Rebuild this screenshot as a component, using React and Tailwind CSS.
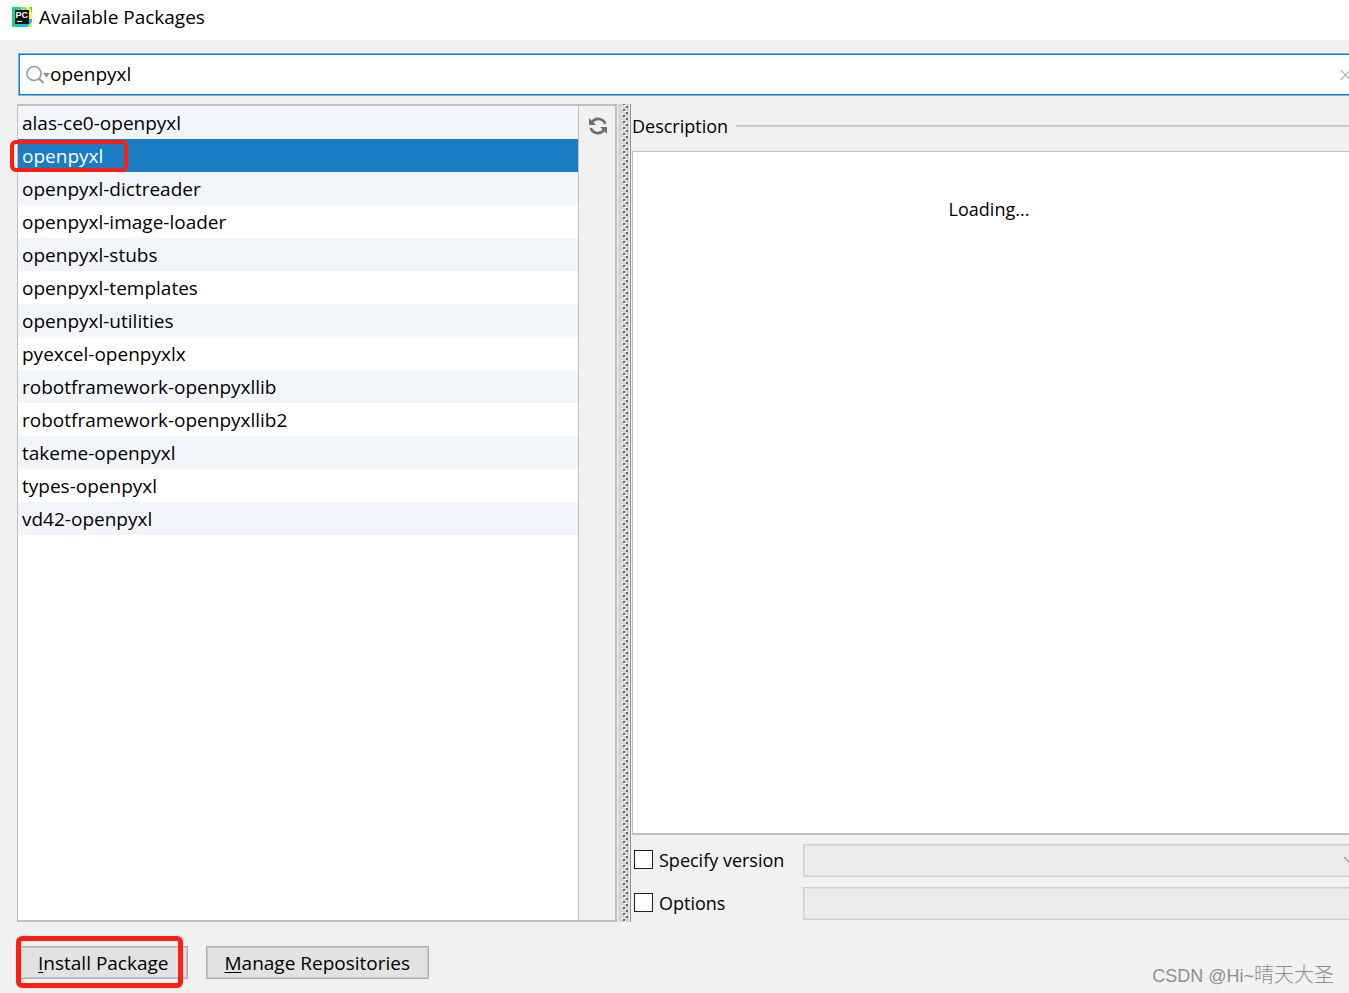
import { useState } from 'react'

const PACKAGES = [
  'alas-ce0-openpyxl',
  'openpyxl',
  'openpyxl-dictreader',
  'openpyxl-image-loader',
  'openpyxl-stubs',
  'openpyxl-templates',
  'openpyxl-utilities',
  'pyexcel-openpyxlx',
  'robotframework-openpyxllib',
  'robotframework-openpyxllib2',
  'takeme-openpyxl',
  'types-openpyxl',
  'vd42-openpyxl',
]

function AppIcon() {
  return (
    <svg className="size-5 shrink-0" viewBox="0 0 20 20" aria-hidden="true">
      <rect width="20" height="20" fill="#1fcf8c" />
      <path d="M9 0h5v4H8z" fill="#7fe07a" />
      <path d="M13 0h5l2 6v8h-4V4z" fill="#f6f04c" />
      <path d="M6 20l4-4h6l1-4h3v4l-4 4z" fill="#0cc0ee" />
      <path d="M20 15v5h-5z" fill="#d9f27a" />
      <rect x="3" y="3" width="14" height="14" fill="#101010" />
      <text x="3.500" y="11" fontSize="9" fontWeight="700" fontFamily="Liberation Sans, sans-serif" fill="#fff">PC</text>
      <path d="M5 14.500h5" stroke="#fff" strokeWidth="1.200" />
    </svg>
  )
}

function SearchIcon() {
  return (
    <svg className="h-5 w-6 shrink-0" viewBox="0 0 24 20" aria-hidden="true">
      <circle cx="8" cy="8.500" r="7" fill="none" stroke="#9aa0a6" strokeWidth="1.700" />
      <path d="M12.800 13.500l4.700 4.500" stroke="#9aa0a6" strokeWidth="2.400" />
      <path d="M17 8h7l-3.500 4.500z" fill="#8a9097" />
    </svg>
  )
}

function ReloadIcon() {
  return (
    <svg className="size-5" viewBox="0 0 20 20" aria-hidden="true">
      <path d="M4 6.200A7.500 7.500 0 0 1 17.300 8" fill="none" stroke="#6e6e6e" strokeWidth="2.600" />
      <path d="M1 2v7h7z" fill="#6e6e6e" />
      <path d="M16 13.800A7.500 7.500 0 0 1 2.700 12" fill="none" stroke="#6e6e6e" strokeWidth="2.600" />
      <path d="M19 18v-7h-7z" fill="#6e6e6e" />
    </svg>
  )
}

function Splitter() {
  return (
    <div className="flex w-[13px] shrink-0 border-r border-[#8090a3]">
      <svg className="h-full w-[11px] bg-[#d6d6d6]" aria-hidden="true">
        <defs>
          <pattern id="grip" y="4" width="11" height="6" patternUnits="userSpaceOnUse">
            <rect x="3" y="0" width="2" height="1" fill="#fff" />
            <rect x="5" y="1" width="2" height="2" fill="#6b6b6b" />
            <rect x="6" y="3" width="2" height="1" fill="#fff" />
            <rect x="8" y="4" width="2" height="2" fill="#6b6b6b" />
          </pattern>
        </defs>
        <rect width="100%" height="100%" fill="url(#grip)" />
      </svg>
    </div>
  )
}

function PackageList({ selected, onSelect }) {
  return (
    <div className="flex w-[600px] shrink-0 border-t-2 border-r-2 border-b-2 border-l border-[#c0c0c0]">
      <ul className="flex-1 bg-white">
        {PACKAGES.map(name => (
          <li key={name} className="relative odd:bg-[#f2f5fa]">
            <button
              type="button"
              onClick={() => onSelect(name)}
              className={`block h-[33px] w-full px-1 text-left ${name === selected ? 'bg-[#1a7dc4] text-white' : ''}`}
            >
              {name}
            </button>
            {name === 'openpyxl' && (
              <span className="pointer-events-none absolute -left-2 top-px h-8 w-[118px] rounded-md border-4 border-[#ff1e10]" />
            )}
          </li>
        ))}
      </ul>
      <div className="flex w-[37px] flex-col items-center border-l border-[#c0c0c0] pt-2.5 pl-0.5">
        <button type="button" aria-label="Reload packages"><ReloadIcon /></button>
      </div>
    </div>
  )
}

const LABEL = 'flex items-center gap-1.5 pb-0.5 pl-0.5'
const CHECKBOX = 'size-[19px] shrink-0 appearance-none border border-[#222] bg-white checked:bg-[#1a7dc4]'
const FIELD = 'block h-[33px] w-full border border-r-0 border-[#cdcdcd] bg-[#ebebeb] inset-ring inset-ring-[#e0e0e0]'

function Details() {
  return (
    <section className="flex min-w-0 flex-1 flex-col pl-px text-[18px]">
      <div className="flex h-[47px] items-center gap-2 pb-[3px]">
        <h2>Description</h2>
        <div className="h-0.5 flex-1 bg-[#cbcbcb]" />
      </div>
      <div className="flex-1 border-t border-b-2 border-l border-[#c0c0c0] bg-white pt-[45px] pr-1 text-center">
        Loading...
      </div>
      <div className="-mr-px grid grid-cols-[171px_1fr] items-center gap-y-2.5 pt-[9px] pb-0.5">
        <label className={LABEL}>
          <input type="checkbox" className={CHECKBOX} />
          Specify version
        </label>
        <div className="relative">
          <select disabled aria-label="Version" className={`appearance-none ${FIELD}`} />
          <svg className="absolute right-px top-3 h-2 w-[5px]" viewBox="0 0 5 8" aria-hidden="true">
            <path d="M0 1l6 6" stroke="#a0a0a0" strokeWidth="1.500" />
          </svg>
        </div>
        <label className={LABEL}>
          <input type="checkbox" className={CHECKBOX} />
          Options
        </label>
        <input type="text" disabled aria-label="Install options" className={`px-2 ${FIELD}`} />
      </div>
    </section>
  )
}

const BUTTON = 'h-[33px] border border-[#adadad] bg-[#e2e2e2] px-[18px] inset-ring inset-ring-[#c9c9c9]'

export default function App() {
  const [query, setQuery] = useState('openpyxl')
  const [selected, setSelected] = useState('openpyxl')

  return (
    <div className="flex min-h-screen flex-col overflow-hidden bg-[#f1f1f1] font-['Open_Sans','Noto_Sans_CJK_SC',sans-serif] text-[19px] leading-6 text-black">
      <header className="flex h-10 items-center gap-[7px] bg-white pb-1.5 pl-3">
        <AppIcon />
        <h1>Available Packages</h1>
      </header>

      <div className="mt-[13px] ml-[18px] border border-r-0 border-[#6fb4ea]">
        <div className="flex h-[41px] items-center border border-r-0 border-[#0b80e0] bg-white pl-1.5">
          <SearchIcon />
          <input
            type="text"
            aria-label="Search packages"
            value={query}
            onChange={e => setQuery(e.target.value)}
            className="min-w-0 flex-1 bg-transparent pb-0.5 outline-none"
          />
          <button type="button" aria-label="Clear search" onClick={() => setQuery('')}>
            <svg className="h-3 w-[9px]" viewBox="0 0 9 12" aria-hidden="true">
              <path d="M0.500 1l10 10M10.500 1l-10 10" stroke="#b4bac0" strokeWidth="1.500" />
            </svg>
          </button>
        </div>
      </div>

      <main className="mt-2 ml-[17px] flex flex-1">
        <PackageList selected={selected} onSelect={setSelected} />
        <div className="w-px shrink-0" />
        <Splitter />
        <Details />
      </main>

      <footer className="flex items-start justify-between pt-6 pb-1.5 pl-[19px]">
        <div className="flex gap-[18px]">
          <div className="relative">
            <button type="button" className={BUTTON}>
              <span className="underline underline-offset-2">I</span>nstall Package
            </button>
            <span className="pointer-events-none absolute -left-[3px] -top-2.5 h-[52px] w-[167px] rounded-md border-[5px] border-[#ff1e10]" />
          </div>
          <button type="button" className={BUTTON}>
            <span className="underline underline-offset-2">M</span>anage Repositories
          </button>
        </div>
        <p className="mt-[17px] h-6 pr-[15px] font-['Liberation_Sans','Noto_Sans_CJK_SC',sans-serif] text-[18px] font-light text-[#8f8f8f]">
          CSDN @Hi~<span className="text-[20px]">晴天大圣</span>
        </p>
      </footer>
    </div>
  )
}
